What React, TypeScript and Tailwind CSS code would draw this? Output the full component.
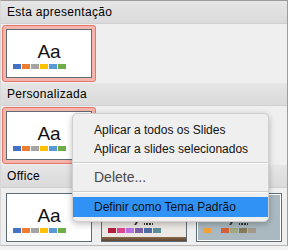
const officeColors = ['#4472c4', '#ed7d31', '#a5a5a5', '#ffc000', '#5b9bd5', '#70ad47']
const berlinColors = ['#b71e42', '#de478e', '#bc6ee3', '#7b5ea8', '#4e6ca4', '#5a8f9a']
const textureColors = ['#f4a13c', 'transparent', '#d2603a', '#a0a880', '#857a5a', '#a39a8a']

function Swatches({ colors }: { colors: string[] }) {
  return (
    <div className="flex gap-[1px] ml-[6px] mt-[3px]">
      {colors.map((c, i) => (
        <div key={i} className="w-[8px] h-[5px]" style={{ backgroundColor: c }} />
      ))}
    </div>
  )
}

// bottoms of the title glyphs, the rest sits under the menu
function GlyphFeet() {
  return (
    <div className="mt-[28px] h-[3px] flex justify-center items-end gap-[1px]">
      <div className="w-[2px] h-[3px] bg-[#333] -skew-x-[30deg] mr-[6px]" />
      <div className="w-[1px] h-[2px] bg-[#333]" />
      <div className="w-[2px] h-[2px] bg-[#333]" />
      <div className="w-[2px] h-[2px] bg-[#333]" />
      <div className="w-[1px] h-[2px] bg-[#333]" />
    </div>
  )
}

function Slide({ kind = 'office' }: { kind?: 'office' | 'berlin' | 'texture' }) {
  if (kind === 'berlin') {
    return (
      <div className="w-[86px] h-[49px] border border-[#5f6b75] bg-[#ece9e4] flex flex-col">
        <GlyphFeet />
        <Swatches colors={berlinColors} />
        <div className="mt-auto h-[4px] bg-gradient-to-b from-[#8a6a4c] to-[#5e4532]" />
      </div>
    )
  }
  if (kind === 'texture') {
    return (
      <div className="w-[86px] h-[49px] border border-[#5f6b75] ring-1 ring-inset ring-white bg-[#a9b9bf] flex flex-col">
        <GlyphFeet />
        <Swatches colors={textureColors} />
      </div>
    )
  }
  return (
    <div className="w-[86px] h-[49px] border border-[#5f6b75] bg-white flex flex-col">
      <div className="pt-[12px] text-center text-[19px] leading-[19px] font-light text-[#111]">Aa</div>
      <Swatches colors={officeColors} />
    </div>
  )
}

function Tile({ selected = false, children }: { selected?: boolean; children: React.ReactNode }) {
  return (
    <div
      className={
        selected
          ? 'p-[3px] border border-[#e5766a] bg-[#f5b5aa] rounded-[3px]'
          : 'p-[3px] border border-transparent'
      }
    >
      {children}
    </div>
  )
}

function Header({ title }: { title: string }) {
  return (
    <div className="h-[23px] flex items-center pl-[6px] text-[12px] tracking-[0.3px] text-black bg-gradient-to-b from-[#e6e6e6] to-[#dadada] border-b border-[#d0d0d0]">
      {title}
    </div>
  )
}

function MenuItem({ label, active = false, muted = false }: { label: string; active?: boolean; muted?: boolean }) {
  return (
    <div
      className={
        (active ? 'h-[20px] bg-[#3192f5] text-[#111] ' : 'h-[19px] ') +
        (muted ? 'text-[14px] text-[#4a4a4a] ' : 'text-[12px] text-[#111] ') +
        'flex items-center pl-[21px]'
      }
    >
      {label}
    </div>
  )
}

function Separator() {
  return (
    <div className="h-[10px] flex flex-col justify-center">
      <div className="h-[2px] border-t border-[#d0d0d0] border-b border-b-white" />
    </div>
  )
}

export default function App() {
  return (
    <div
      className="w-[288px] h-[250px] relative overflow-hidden bg-[#f0f0f0]"
      style={{ fontFamily: '"Liberation Sans", Arial, sans-serif' }}
    >
      <div className="h-[246px] bg-[#efefef] border-t border-r border-[#9c9c9c] border-b border-b-[#b8b8b8] border-l border-l-[#d8d8d8]">
        <Header title="Esta apresentação" />
        <div className="flex px-[1px] py-[1px]">
          <Tile selected>
            <Slide />
          </Tile>
        </div>
        <Header title="Personalizada" />
        <div className="flex px-[1px] py-[1px]">
          <Tile selected>
            <Slide />
          </Tile>
        </div>
        <Header title="Office" />
        <div className="flex gap-[1px] px-[1px] py-[1px]">
          <Tile>
            <Slide />
          </Tile>
          <Tile>
            <Slide kind="berlin" />
          </Tile>
          <Tile>
            <Slide kind="texture" />
          </Tile>
        </div>
      </div>

      <div className="absolute left-[72px] top-[113px] w-[197px] pt-[6px] pb-[4px] rounded-[5px] bg-[#efefef] border border-[#cfcfcf] shadow-[0_2px_6px_rgba(0,0,0,0.25)] overflow-hidden">
        <MenuItem label="Aplicar a todos os Slides" />
        <MenuItem label="Aplicar a slides selecionados" />
        <Separator />
        <MenuItem label="Delete..." muted />
        <Separator />
        <MenuItem label="Definir como Tema Padrão" active />
      </div>
    </div>
  )
}
